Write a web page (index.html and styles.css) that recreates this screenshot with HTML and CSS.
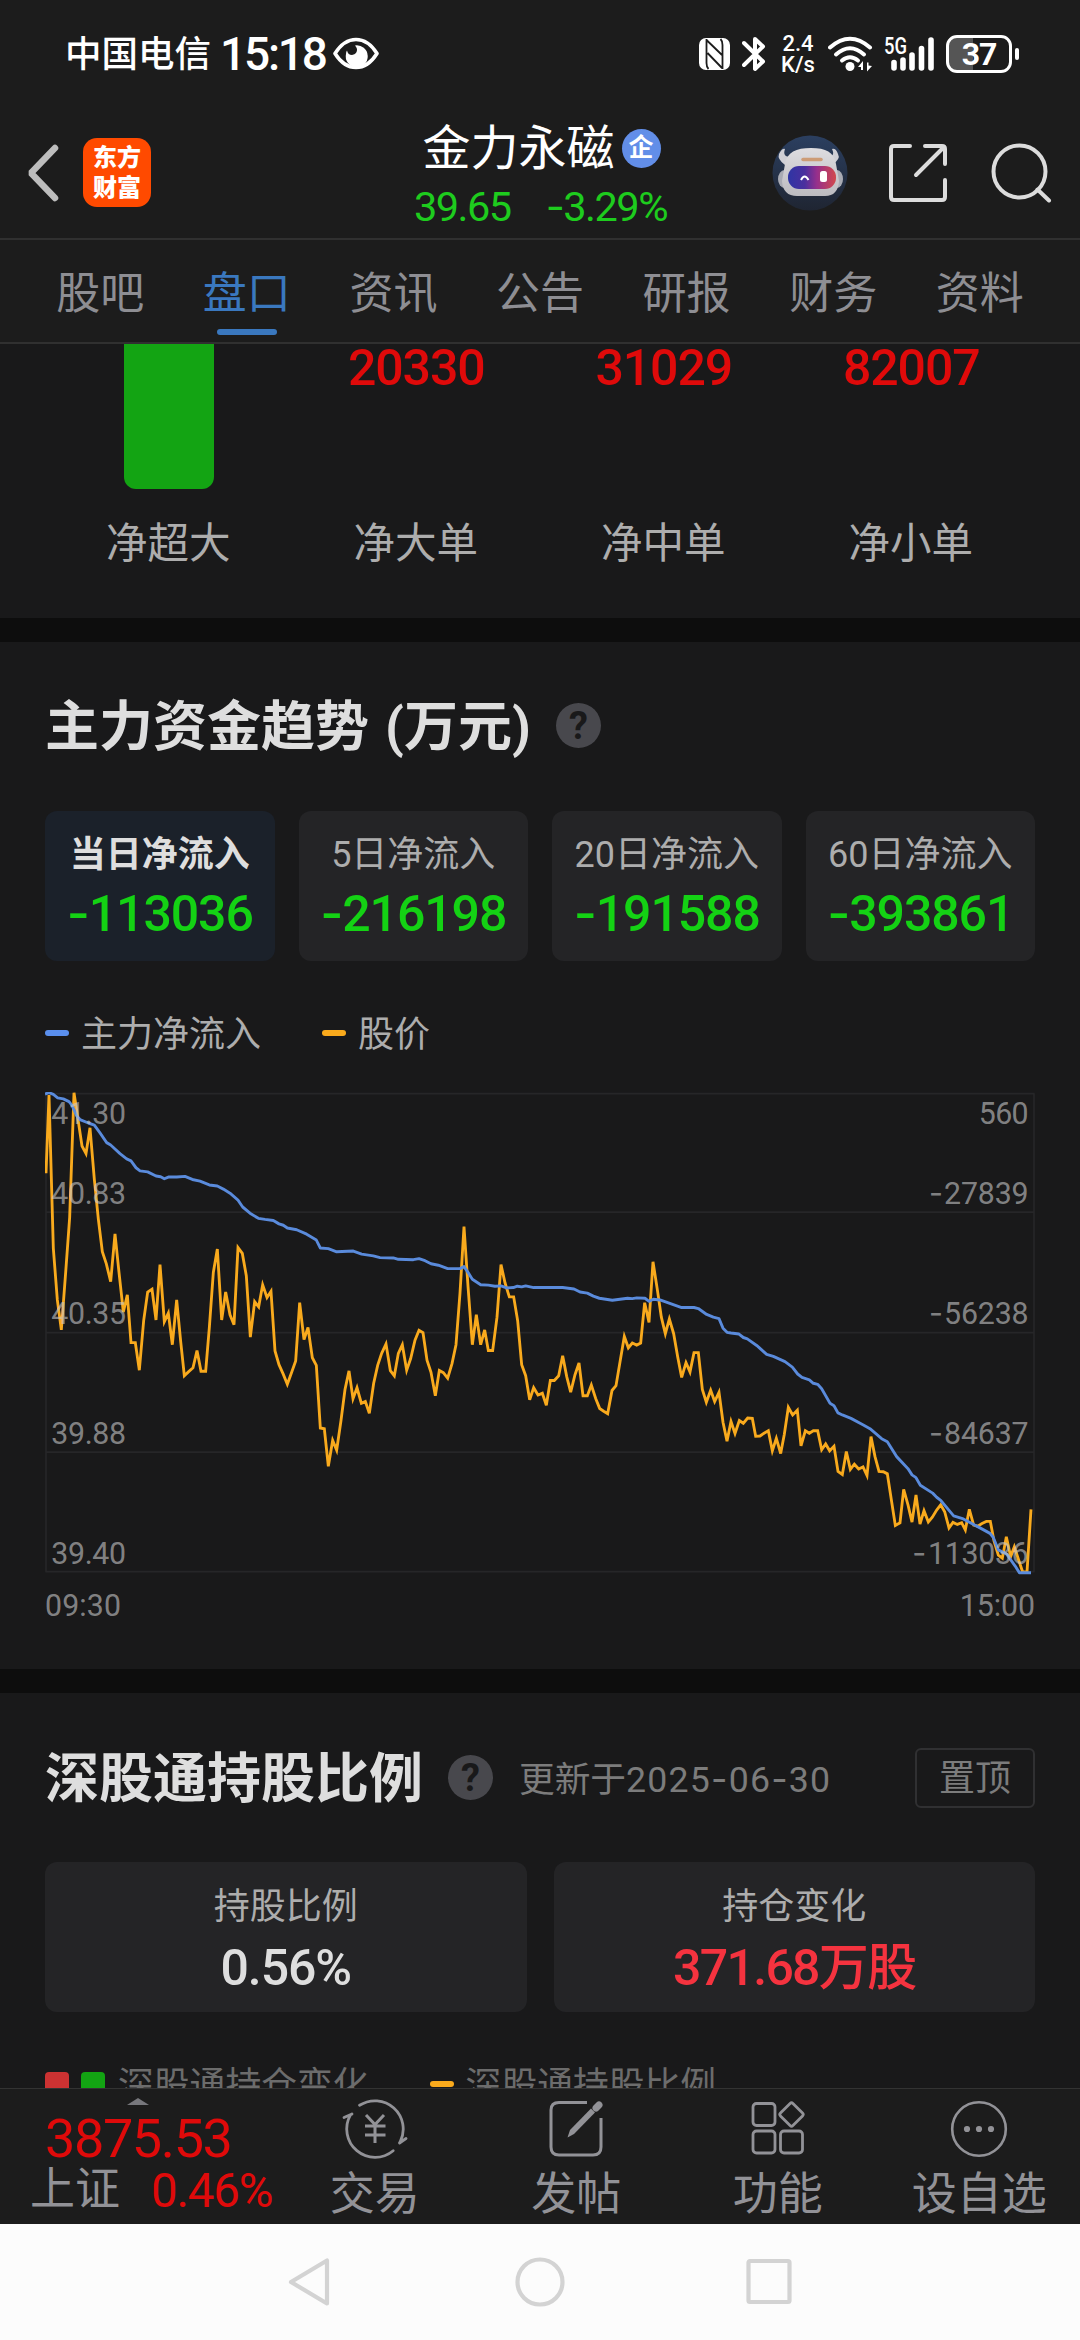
FILE: index.html
```html
<!DOCTYPE html>
<html lang="zh-CN">
<head>
<meta charset="utf-8">
<title>金力永磁 - 盘口</title>
<link rel="stylesheet" href="styles.css">
</head>
<body>
<div class="app">
  <div class="status">
    <span class="carrier">中国电信</span>
    <span class="clock">15:18</span>
    <svg class="eye" width="46" height="33" viewBox="0 0 46 33"><path d="M2 16.500C8 7 15 2.500 23 2.500S38 7 44 16.500C38 26 31 30.500 23 30.500S8 26 2 16.500Z" fill="none" stroke="#fff" stroke-width="3.600" stroke-linejoin="round"/><path d="M22 8.500A11 11 0 1 1 13 17Q13 14.500 14 13.500Q15 18 19 18Q24.500 17 24 12Q23.500 10 22 8.500Z" fill="#fff"/></svg>
    <svg class="nfc" width="31" height="34" viewBox="0 0 31 34"><rect y="1" width="31" height="32" rx="7" fill="#fff"/><path d="M7.500 2V26Q7.500 30 9.500 32M7.500 3L23 18M8.500 16L23 31M23.500 32V8Q23.500 4 21.500 2" fill="none" stroke="#1c1c1c" stroke-width="1.800"/></svg>
    <svg class="bt" width="24" height="36" viewBox="0 0 24 36"><path d="M2 7L21 25.500L13 33V3L21 10.500L2 29" fill="none" stroke="#fff" stroke-width="4" stroke-linejoin="round" stroke-linecap="round"/></svg>
    <span class="speed"><span>2.4</span><span>K/s</span></span>
    <svg class="wifi" width="45" height="36" viewBox="0 0 45 36"><g fill="none" stroke="#fff" stroke-width="4" stroke-linecap="round"><path d="M2 11.500Q22 -6 42 11.500"/><path d="M8 18.500Q22 6 36 18.500"/><path d="M14 24.500Q22 18 30 24.500"/></g><circle cx="22" cy="30.500" r="4.500" fill="#fff"/><path d="M30 31l5-6v9h-2v-3zM44 30l-5 5.500v-9h1.500v3z" fill="#fff"/></svg>
    <svg class="signal" width="51" height="36" viewBox="0 0 51 36"><text x="0" y="17.500" textLength="23" lengthAdjust="spacingAndGlyphs" class="gen">5G</text><g stroke="#fff" stroke-width="5.600" stroke-linecap="round"><path d="M10 26.500V32M19 24V32M28 19V32M37.500 12.500V32M47 4V32"/></g></svg>
    <span class="battery"><span class="cell">37</span><span class="nub"></span></span>
  </div>

  <div class="header">
    <svg class="back" width="34" height="58" viewBox="0 0 34 58"><path d="M29 4L5 29L29 54" fill="none" stroke="#bdbdbd" stroke-width="6.500" stroke-linecap="round" stroke-linejoin="bevel"/></svg>
    <div class="logo"><span>东方</span><span>财富</span></div>
    <div class="stock">
      <div class="name">金力永磁<span class="badge">企</span></div>
      <div class="quote"><span>39.65</span><span><i class="minus">-</i>3.29%</span></div>
    </div>
    <svg class="robot" width="76" height="76" viewBox="0 0 76 76">
      <defs><linearGradient id="visor"><stop offset="0" stop-color="#2f35a4"/><stop offset=".35" stop-color="#4a2f9e"/><stop offset=".6" stop-color="#962f8c"/><stop offset="1" stop-color="#d2484c"/></linearGradient><linearGradient id="sky" x2="0" y2="1"><stop offset="0" stop-color="#2b3f60"/><stop offset="1" stop-color="#1f2532"/></linearGradient><linearGradient id="shell" x2="0" y2="1"><stop offset="0" stop-color="#dedde0"/><stop offset="1" stop-color="#bcbbc0"/></linearGradient></defs>
      <circle cx="38" cy="38" r="37.500" fill="url(#sky)"/>
      <path d="M13 30Q5 24 7 19Q10 13 13 14Q10 22 19 22ZM60 30Q69 24 66 19Q64 13 60 14Q64 22 54 22Z" fill="#cfcfd5"/>
      <ellipse cx="12.500" cy="44" rx="6.500" ry="9" fill="#a9abb4"/><ellipse cx="65" cy="44" rx="6" ry="9" fill="#a9abb4"/>
      <path d="M39 13C24 13 15 17 13 29L10 46Q11 61 25 61H53Q66 61 67 46L64 29C62 17 54 13 39 13Z" fill="url(#shell)"/>
      <path d="M31 24.500H49" stroke="#cd9c76" stroke-width="3.500" stroke-linecap="round"/>
      <rect x="16" y="31" width="48" height="23" rx="11" fill="url(#visor)"/>
      <path d="M29 45q3.500-7 7.500 0" fill="none" stroke="#fff" stroke-width="2"/><rect x="48" y="36" width="7" height="11" rx="2.500" fill="#fff"/>
    </svg>
    <svg class="share" width="60" height="60" viewBox="0 0 60 60"><g fill="none" stroke="#dcdcdc" stroke-width="4" stroke-linecap="round" stroke-linejoin="round"><path d="M22 3H6Q3 3 3 6V54Q3 57 6 57H54Q57 57 57 54V37M37 3H54Q57 3 57 6V21M55 5L28 32"/></g></svg>
    <svg class="search" width="62" height="60" viewBox="0 0 62 60"><g fill="none" stroke="#dcdcdc" stroke-width="4" stroke-linecap="round"><circle cx="28.500" cy="28.500" r="26"/><path d="M46.500 46.500L58 57.500"/></g></svg>
  </div>

  <div class="tabs">
    <span>股吧</span><span class="on">盘口</span><span>资讯</span><span>公告</span><span>研报</span><span>财务</span><span>资料</span>
  </div>

  <div class="content">
    <section class="orders">
      <div class="order"><div class="bar"></div><span class="label">净超大</span></div>
      <div class="order"><b>20330</b><span class="label">净大单</span></div>
      <div class="order"><b>31029</b><span class="label">净中单</span></div>
      <div class="order"><b>82007</b><span class="label">净小单</span></div>
    </section>

    <section class="trend">
      <h2>主力资金趋势<span class="unit">(万元)</span><span class="help">?</span></h2>
      <div class="cards four">
        <div class="card sel"><span>当日净流入</span><b><i class="minus">-</i>113036</b></div>
        <div class="card"><span>5日净流入</span><b><i class="minus">-</i>216198</b></div>
        <div class="card"><span>20日净流入</span><b><i class="minus">-</i>191588</b></div>
        <div class="card"><span>60日净流入</span><b><i class="minus">-</i>393861</b></div>
      </div>
      <div class="legend"><i class="dash blue"></i><span>主力净流入</span><i class="dash amber"></i><span>股价</span></div>
      <svg class="chart" width="990" height="533" viewBox="45 36 2970 1548" preserveAspectRatio="none">
        <path d="M46 41H3014M46 385H3014M46 735H3014M46 1082H3014M46 1429H3014M48 41V1429M3012 41V1429" fill="none" stroke="#262628" stroke-width="5"/>
        <polyline fill="none" stroke="#f9aa1d" stroke-width="8.500" points="48,272 57,45 70,490 82,640 94,727 107,560 119,400 132,38 144,115 156,193 168,215 180,140 193,290 205,405 217,500 229,535 242,587 255,448 267,560 280,675 292,625 303,764 316,764 328,844 341,700 353,617 366,609 378,698 390,537 403,703 415,678 427,770 440,640 452,760 463,860 476,848 489,837 501,787 513,847 527,847 538,720 550,560 562,492 575,698 587,617 600,683 612,712 624,488 637,505 649,570 661,748 674,645 686,660 698,596 711,633 723,615 735,788 747,828 760,856 772,885 785,850 797,817 809,648 822,755 834,720 847,808 859,830 871,1012 883,1014 895,1123 908,1048 920,1076 933,990 945,900 957,846 969,927 981,895 994,940 1006,935 1018,969 1031,882 1043,830 1055,795 1068,768 1081,845 1093,860 1105,795 1117,770 1130,844 1142,810 1155,757 1167,728 1179,735 1191,815 1203,850 1216,918 1228,845 1240,851 1253,867 1266,825 1278,770 1290,620 1302,427 1314,600 1327,770 1339,683 1352,770 1364,727 1375,787 1388,787 1401,690 1413,537 1425,590 1438,631 1451,631 1463,700 1475,828 1487,860 1499,930 1511,895 1524,916 1537,911 1549,946 1561,874 1573,874 1586,860 1598,802 1610,862 1622,908 1635,857 1647,823 1659,918 1672,918 1684,887 1697,926 1709,955 1721,963 1733,970 1746,903 1758,889 1770,820 1783,746 1795,779 1807,765 1820,771 1832,765 1844,648 1857,705 1869,529 1882,610 1894,690 1906,738 1918,695 1931,738 1943,805 1955,865 1968,822 1980,849 1992,793 2005,793 2017,900 2029,937 2042,902 2054,935 2067,908 2079,995 2091,1050 2103,993 2115,1028 2128,990 2140,998 2153,983 2167,984 2177,1036 2190,1035 2202,1027 2215,1020 2227,1078 2239,1042 2252,1086 2263,1030 2275,952 2288,974 2302,960 2313,1064 2326,1020 2338,1027 2350,1020 2363,1020 2375,1075 2387,1058 2399,1078 2412,1065 2424,1138 2437,1147 2449,1080 2461,1132 2473,1117 2486,1131 2499,1125 2511,1150 2523,1037 2535,1095 2547,1138 2560,1139 2572,1145 2584,1220 2596,1295 2610,1287 2621,1190 2634,1235 2646,1285 2658,1206 2670,1291 2682,1252 2695,1285 2707,1271 2720,1250 2732,1235 2744,1255 2757,1302 2769,1286 2782,1292 2795,1287 2806,1308 2818,1248 2831,1294 2843,1297 2856,1289 2869,1283 2881,1283 2892,1340 2905,1381 2917,1390 2929,1328 2942,1385 2953,1357 2966,1395 2978,1430 2991,1430 3003,1248"/>
        <polyline fill="none" stroke="#5a8bdc" stroke-width="8.500" stroke-linejoin="round" points="45,42 57,38 70,43 83,53 100,56 117,64 126,75 140,105 150,116 175,126 193,132 210,155 230,183 242,190 270,215 290,230 303,236 318,256 330,265 353,268 378,280 392,282 403,288 415,283 440,283 465,281 487,290 510,295 538,306 562,309 580,318 600,330 624,350 638,370 660,388 685,403 705,406 730,409 747,419 760,423 772,431 800,436 830,449 859,466 871,489 895,491 920,500 970,498 995,507 1030,512 1050,517 1090,518 1105,522 1150,523 1167,520 1185,526 1203,535 1225,539 1253,549 1290,549 1302,543 1314,560 1327,580 1352,596 1375,597 1395,600 1413,599 1430,605 1450,604 1462,600 1475,602 1487,599 1511,604 1598,604 1632,608 1650,617 1672,620 1690,629 1708,635 1747,641 1793,635 1807,636 1820,634 1845,635 1857,644 1870,638 1890,640 1955,662 1992,662 2005,665 2030,682 2050,690 2067,694 2079,722 2091,734 2103,736 2127,739 2140,749 2152,753 2180,772 2210,798 2230,804 2265,819 2287,835 2303,855 2316,865 2338,872 2350,882 2363,885 2375,898 2400,940 2412,947 2424,968 2437,974 2463,984 2500,1003 2520,1014 2555,1043 2572,1052 2600,1095 2634,1130 2646,1148 2658,1156 2671,1178 2708,1201 2720,1213 2733,1223 2771,1267 2800,1276 2850,1302 2880,1318 2890,1330 2905,1366 2930,1378 2955,1412 2968,1432 3003,1432"/>
        <g class="axis">
          <text x="64" y="130" textLength="224">41.30</text><text x="64" y="362" textLength="224">40.83</text><text x="64" y="711" textLength="224">40.35</text><text x="64" y="1059" textLength="224">39.88</text><text x="64" y="1408" textLength="224">39.40</text>
          <text x="2846" y="130" textLength="150">560</text>
          <text x="2742" y="362" textLength="254">27839</text><text x="2742" y="711" textLength="254">56238</text><text x="2742" y="1059" textLength="254">84637</text><text x="2694" y="1408" textLength="302">113036</text>
          <text x="2697" y="362" class="neg" textLength="42" lengthAdjust="spacingAndGlyphs">-</text><text x="2697" y="711" class="neg" textLength="42" lengthAdjust="spacingAndGlyphs">-</text><text x="2697" y="1059" class="neg" textLength="42" lengthAdjust="spacingAndGlyphs">-</text><text x="2647" y="1408" class="neg" textLength="42" lengthAdjust="spacingAndGlyphs">-</text>
          <text x="45" y="1558" textLength="228">09:30</text><text x="2789" y="1558" textLength="226">15:00</text>
        </g>
      </svg>
    </section>

    <section class="holding">
      <h2>深股通持股比例<span class="help">?</span><span class="updated">更新于<em>2025<i class="minus">-</i>06<i class="minus">-</i>30</em></span><span class="pin">置顶</span></h2>
      <div class="cards two">
        <div class="card"><span>持股比例</span><b class="plain">0.56%</b></div>
        <div class="card"><span>持仓变化</span><b class="up">371.68万股</b></div>
      </div>
      <div class="legend dim"><i class="sq red"></i><i class="sq green"></i><span>深股通持仓变化</span><i class="dash amber"></i><span>深股通持股比例</span></div>
    </section>
  </div>

  <div class="toolbar">
    <div class="index">
      <svg class="caret" width="22" height="7" viewBox="0 0 22 7"><path d="M0 7L11 0L22 7Z" fill="#77777c"/></svg>
      <span class="points">3875.53</span>
      <span class="row"><span>上证</span><b>0.46%</b></span>
    </div>
    <div class="tool"><svg width="66" height="60" viewBox="0 0 66 60"><g fill="none" stroke="#929297" stroke-width="2.800" stroke-linejoin="round" stroke-linecap="round"><path d="M17.600 6.300A28.300 28.300 0 0 1 58.200 42.800L57.500 44L64 39.500"/><path d="M51.200 51.700A28.300 28.300 0 0 1 8.500 15.900L10 15L2 18.500"/></g><path d="M24 16L33 25.500L42 16M33 25.500V44M23 27H43.500M23 36H43.500" fill="none" stroke="#929297" stroke-width="3"/></svg><span>交易</span></div>
    <div class="tool"><svg width="56" height="60" viewBox="0 0 56 60"><path d="M39 3.500H11Q3 3.500 3 11V48Q3 56 11 56H45Q53 56 53 48V19" fill="none" stroke="#929297" stroke-width="3"/><path d="M19.500 38.500L22 31L43 9.500L47 13.500L26 35Z" fill="#929297"/><path d="M48 9L51 6" stroke="#929297" stroke-width="7" stroke-linecap="round"/></svg><span>发帖</span></div>
    <div class="tool"><svg width="56" height="60" viewBox="0 0 56 60"><g fill="none" stroke="#929297" stroke-width="2.800"><rect x="3" y="4.500" width="22" height="22" rx="3.500"/><rect x="3" y="32" width="22" height="22" rx="3.500"/><rect x="30.500" y="32" width="22" height="22" rx="3.500"/><rect x="-8.800" y="-8.800" width="17.600" height="17.600" rx="2" transform="translate(41.500 15.500) rotate(45)"/></g></svg><span>功能</span></div>
    <div class="tool"><svg width="60" height="60" viewBox="0 0 60 60"><circle cx="30" cy="30" r="26.800" fill="none" stroke="#929297" stroke-width="2.600"/><g fill="#929297"><circle cx="18" cy="30" r="3.100"/><circle cx="30" cy="30" r="3.100"/><circle cx="42" cy="30" r="3.100"/></g></svg><span>设自选</span></div>
  </div>

  <div class="nav">
    <svg width="504" height="50" viewBox="0 0 504 50"><g fill="none" stroke="#d3d3d3" stroke-width="4.200" stroke-linejoin="round"><path d="M39 3.500V46.500L3 25Z"/><circle cx="252" cy="25" r="22.500"/><rect x="460.500" y="4" width="41" height="41" rx="1.500"/></g></svg>
  </div>
</div>
</body>
</html>
```
FILE: styles.css
```css
* { box-sizing: border-box; }
body { margin: 0; background: #19191a; font-family: Roboto, "Noto Sans CJK SC", sans-serif; }
i, em { font-style: normal; }
.app { width: 1080px; height: 2340px; display: flex; flex-direction: column; overflow: hidden; }
.minus { font-family: Inter, sans-serif; font-weight: 400; display: inline-block; line-height: 1; }

.status { height: 107px; flex: none; background: #1c1c1c; color: #fff; display: flex; align-items: center; padding: 0 61px 0 65px; }
.carrier { font-size: 36.500px; font-weight: 500; line-height: 50px; margin-right: 9px; padding-top: 2px; }
.clock { font-size: 46px; font-weight: 500; line-height: 50px; letter-spacing: -2.200px; width: 113px; }
.eye { margin-right: auto; }
.nfc { margin-right: 12px; }
.bt { margin-right: 14px; }
.speed { width: 36px; font-size: 22px; font-weight: 500; line-height: 21px; display: flex; flex-direction: column; align-items: center; margin-right: 12px; padding-top: 1px; }
.wifi { margin-right: 11px; }
.gen { font: 500 23px Roboto, sans-serif; fill: #fff; }
.signal { margin-right: 11px; }
.battery { display: flex; align-items: center; gap: 3px; }
.cell { width: 66px; height: 38px; border: 3px solid #fff; border-radius: 11px; font-size: 32px; font-weight: 700; line-height: 33px; text-align: center; letter-spacing: -1px; background: linear-gradient(90deg, #555 24px, transparent 24px); }
.nub { width: 4px; height: 12px; border-radius: 2px; background: #fff; }

.header { height: 133px; flex: none; background: #1c1c1c; border-bottom: 2px solid #303030; display: flex; align-items: center; padding: 0 27px 0 26px; }
.back { margin-right: 23px; }
.logo { width: 68px; height: 69px; border-radius: 14px; background: #ff4a00; color: #fff; font-size: 24px; font-weight: 900; line-height: 30px; display: flex; flex-direction: column; align-items: center; justify-content: center; }
.stock { flex: 1; display: flex; flex-direction: column; align-items: center; padding: 5px 0 0 160px; }
.name { display: flex; align-items: center; font-size: 48px; line-height: 60px; color: #fff; }
.badge { width: 39px; height: 39px; border-radius: 50%; background: #628ee8; font-size: 25px; font-weight: 700; line-height: 37px; text-align: center; margin-left: 7px; }
.quote { display: flex; gap: 35px; color: #1ecc1e; font-size: 41.500px; line-height: 50px; margin: 3px 2px 0 0; letter-spacing: -1.500px; }
.robot { margin-right: 40px; }
.share { margin-right: 43px; }

.tabs { height: 104px; flex: none; background: #1c1c1c; border-bottom: 2px solid #303030; display: flex; padding: 0 27px; }
.tabs span { flex: 1; font-size: 44px; line-height: 64px; padding-top: 22px; text-align: center; color: #8e8e93; display: flex; flex-direction: column; align-items: center; }
.tabs .on { color: #3a78bf; }
.tabs .on::after { content: ""; width: 60px; height: 6px; border-radius: 3px; background: #3a78bf; margin-top: 3px; }

.content { height: 1744px; flex: none; overflow: hidden; }
section { background: #19191a; padding: 0 45px; }
.orders { height: 274px; display: flex; }
.order { flex: 1; display: flex; flex-direction: column; align-items: center; justify-content: space-between; padding-bottom: 44px; }
.order b { font-size: 50px; font-weight: 500; line-height: 50px; letter-spacing: -1.100px; color: #df0a0a; margin-top: -1px; }
.order .label { font-size: 41.500px; line-height: 60px; color: #adadad; margin-left: -1px; }
.bar { width: 90px; height: 145px; border-radius: 0 0 12px 12px; background: #13a413; }

.trend { height: 1075px; border-top: 24px solid #0d0d0d; border-bottom: 24px solid #0d0d0d; }
h2 { margin: 0; display: flex; align-items: center; font-size: 54px; font-weight: 700; line-height: 80px; color: #dedede; }
.trend h2 { height: 124px; padding-top: 48px; }
.unit { margin-left: 16px; }
.help { width: 45px; height: 45px; border-radius: 50%; background: #48484d; color: #19191a; font-size: 38px; font-weight: 700; line-height: 46px; text-align: center; margin: -5px 0 0 25px; }
.cards { display: grid; }
.four { grid-template-columns: repeat(4, 1fr); gap: 24px; margin-top: 45px; }
.two { grid-template-columns: repeat(2, 1fr); gap: 27px; margin-top: 43px; }
.card { height: 150px; border-radius: 12px; background: #242426; display: flex; flex-direction: column; align-items: center; padding-top: 18px; white-space: nowrap; }
.card span { font-size: 36px; line-height: 52px; color: #adadad; }
.card b { font-size: 50px; font-weight: 500; line-height: 60px; margin-top: 3px; color: #14d214; letter-spacing: -1.100px; }
.card b .minus { font-weight: 500; }
.card.sel { background: #1b212a; }
.card.sel span { color: #dedede; font-weight: 700; }
.two .card span { padding-top: 1px; }
.two .card b { margin-top: 5px; }
.card .plain { color: #dedede; }
.card .up { color: #f5333f; letter-spacing: -1.700px; }
.legend { display: flex; align-items: center; height: 52px; font-size: 36px; line-height: 52px; color: #adadad; margin-top: 46px; }
.legend span { padding-top: 3px; }
.dash { width: 24px; height: 6px; border-radius: 3px; margin-right: 12px; }
.blue { background: #5a8fee; }
.amber { background: #faaa1c; }
.legend span + .dash { margin-left: 61px; }
.chart { display: block; margin-top: 33px; }
.axis text { font: 91px Roboto, sans-serif; fill: rgba(200, 200, 200, .62); }
.axis .neg { font-family: Inter, sans-serif; }

.holding h2 { height: 126px; padding-top: 47px; }
.updated { font-size: 35.700px; font-weight: 400; color: #7c7c7c; margin-left: 26px; }
.updated em { letter-spacing: 1.200px; }
.pin { width: 120px; height: 60px; border: 2px solid #303032; border-radius: 6px; font-size: 36px; font-weight: 400; line-height: 58px; text-align: center; color: #7c7c7c; margin: -4px 0 0 auto; }
.dim { color: #6c6c6c; font-size: 35.800px; }
.sq { width: 24px; height: 24px; border-radius: 4px; margin-right: 12px; }
.red { background: #cc3232; }
.green { background: #13a413; margin-right: 13px; }

.toolbar { height: 136px; flex: none; background: #1c1c1c; border-top: 1px solid #333; display: flex; color: #929297; }
.index { width: 274px; display: flex; flex-direction: column; padding: 9px 0 0 30px; white-space: nowrap; }
.caret { margin-left: 97px; flex: none; }
.points { font-size: 54px; line-height: 54px; color: #df0a0a; letter-spacing: -1.400px; margin: 7px 0 0 15px; }
.row { display: flex; align-items: center; font-size: 45px; line-height: 46px; }
.row b { font-size: 47.500px; font-weight: 400; color: #df0a0a; letter-spacing: -1.200px; margin: 2px 0 0 31px; }
.tool { flex: 1; display: flex; flex-direction: column; align-items: center; padding-top: 10px; font-size: 45px; line-height: 60px; }
.tool svg { flex: none; }
.tool span { margin-top: 6px; height: 60px; flex: none; }

.nav { height: 116px; flex: none; background: #fcfcfc; display: flex; justify-content: center; padding-top: 33px; }
```
